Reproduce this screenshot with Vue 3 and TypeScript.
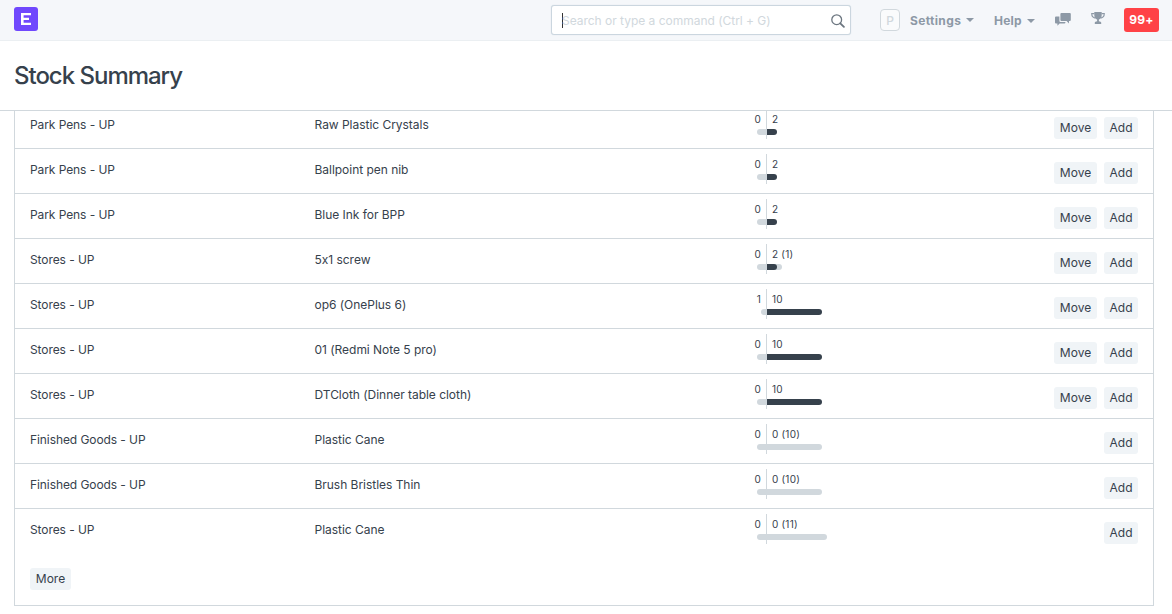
<script setup lang="ts">
interface StockRow {
  warehouse: string
  item: string
  reserved: string
  actual: string
  left: number
  dark: number
  light: number
  movable: boolean
}

const rows: StockRow[] = [
  { warehouse: 'Park Pens - UP', item: 'Raw Plastic Crystals', reserved: '0', actual: '2', left: 9, dark: 10, light: 0, movable: true },
  { warehouse: 'Park Pens - UP', item: 'Ballpoint pen nib', reserved: '0', actual: '2', left: 9, dark: 10, light: 0, movable: true },
  { warehouse: 'Park Pens - UP', item: 'Blue Ink for BPP', reserved: '0', actual: '2', left: 9, dark: 10, light: 0, movable: true },
  { warehouse: 'Stores - UP', item: '5x1 screw', reserved: '0', actual: '2 (1)', left: 9, dark: 10, light: 15, movable: true },
  { warehouse: 'Stores - UP', item: 'op6 (OnePlus 6)', reserved: '1', actual: '10', left: 5, dark: 55, light: 0, movable: true },
  { warehouse: 'Stores - UP', item: '01 (Redmi Note 5 pro)', reserved: '0', actual: '10', left: 9, dark: 55, light: 0, movable: true },
  { warehouse: 'Stores - UP', item: 'DTCloth (Dinner table cloth)', reserved: '0', actual: '10', left: 9, dark: 55, light: 0, movable: true },
  { warehouse: 'Finished Goods - UP', item: 'Plastic Cane', reserved: '0', actual: '0 (10)', left: 9, dark: 0, light: 55, movable: false },
  { warehouse: 'Finished Goods - UP', item: 'Brush Bristles Thin', reserved: '0', actual: '0 (10)', left: 9, dark: 0, light: 55, movable: false },
  { warehouse: 'Stores - UP', item: 'Plastic Cane', reserved: '0', actual: '0 (11)', left: 9, dark: 0, light: 60, movable: false },
]
</script>

<template>
  <div class="page">
    <header class="navbar">
      <svg class="logo" width="24" height="24" viewBox="0 0 24 24">
        <rect width="24" height="24" rx="3" fill="#7048fd" />
        <path d="M7 6h10v2.200H9.600v2.600H15v2.200H9.600v2.800H17V18H7z" fill="#fff" />
      </svg>
      <div class="search">
        <span class="caret"></span>
        <span class="placeholder">Search or type a command (Ctrl + G)</span>
        <svg class="search-icon" width="14" height="14" viewBox="0 0 14 14" fill="none" stroke="#6c7680">
          <circle cx="5.7" cy="5.7" r="4.9" stroke-width="1.3" />
          <path d="M9.3 9.3l3.600 3.600" stroke-width="1.8" stroke-linecap="round" />
        </svg>
      </div>
      <nav class="menu">
        <span class="avatar">P</span>
        <span class="menu-item settings">Settings<i class="arrow"></i></span>
        <span class="menu-item help">Help<i class="arrow low"></i></span>
        <svg class="chat" width="16" height="14" viewBox="0 0 16 14" fill="#8d99a6">
          <path d="M6.4 0h8.400a1 1 0 0 1 1 1v6a1 1 0 0 1-1 1h-.8v2.400L11.600 8H6.400a1 1 0 0 1-1-1V1a1 1 0 0 1 1-1z" />
          <path d="M1 3.500h3.400v4.500a1 1 0 0 0 1 1h5v.5a1 1 0 0 1-1 1H4.600L2.400 12.700v-2.200H1a1 1 0 0 1-1-1v-5a1 1 0 0 1 1-1z" />
        </svg>
        <svg class="trophy" width="14" height="12" viewBox="0 0 14 12">
          <path d="M3.500 1.600H.700c0 2.800 1.200 4.200 3.600 4.500M10.500 1.600h2.800c0 2.800-1.200 4.200-3.600 4.500" fill="none" stroke="#8d99a6" stroke-width="1.1" />
          <path d="M3.300 0h7.400v3.200c0 2.200-1.200 3.700-2.800 4.200v1.800c1.400.2 2.300.7 2.300 1.400V12H3.800v-1.400c0-.7.9-1.200 2.300-1.400V7.400C4.500 6.900 3.300 5.400 3.300 3.200z" fill="#8d99a6" />
        </svg>
        <span class="badge">99+</span>
      </nav>
    </header>

    <div class="page-head"><h1>Stock Summary</h1></div>

    <main class="viewport">
      <section class="panel">
        <div v-for="(row, i) in rows" :key="i" class="row">
          <div class="warehouse">{{ row.warehouse }}</div>
          <div class="item">{{ row.item }}</div>
          <div class="balance">
            <div class="side before">
              <span class="count">{{ row.reserved }}</span>
              <div class="bar-left" :style="{ width: row.left + 'px' }"></div>
            </div>
            <div class="side after">
              <span class="count">{{ row.actual }}</span>
              <div class="bars">
                <div v-if="row.light" class="bar light" :style="{ width: row.light + 'px' }"></div>
                <div v-if="row.dark" class="bar dark" :style="{ width: row.dark + 'px' }"></div>
              </div>
            </div>
          </div>
          <div class="actions">
            <button v-if="row.movable" class="btn move">Move</button>
            <button class="btn add">Add</button>
          </div>
        </div>
        <div class="more"><button class="btn more-btn">More</button></div>
      </section>
    </main>
  </div>
</template>

<style>
body {
  margin: 0;
  background: #fff;
  overflow: hidden;
}
</style>

<style scoped>
.page {
  width: 1172px;
  height: 614px;
  overflow: hidden;
  display: flex;
  flex-direction: column;
  font-family: Inter, "Liberation Sans", sans-serif;
  font-size: 12px;
  color: #36414c;
}
.page * {
  box-sizing: border-box;
}
.navbar {
  height: 41px;
  flex: none;
  display: flex;
  align-items: flex-start;
  background: #f5f7fa;
  border-bottom: 1px solid #ebeff2;
}
.logo {
  display: block;
  margin: 7px 0 0 14px;
}
.search {
  display: flex;
  align-items: center;
  width: 300px;
  height: 30px;
  margin: 5px 0 0 513px;
  padding: 0 5px 0 10px;
  background: #fff;
  border: 1px solid #cbd6df;
  border-radius: 3px;
  box-shadow: 0 0 1px #cbd6df;
}
.caret {
  width: 1px;
  height: 15px;
  margin-right: -1px;
  background: #333;
}
.placeholder {
  flex: 1;
  white-space: nowrap;
  color: #d1d8dd;
  letter-spacing: -0.02px;
}
.search-icon {
  margin-top: 1px;
}
.menu {
  display: flex;
  align-items: flex-start;
}
.avatar {
  width: 20px;
  height: 22px;
  margin: 9px 0 0 29px;
  border: 1px solid #d1d8dd;
  border-radius: 4px;
  background: #fafbfc;
  color: #d1d8dd;
  font-weight: 500;
  line-height: 21px;
  text-align: center;
}
.menu-item {
  display: flex;
  align-items: center;
  height: 16px;
  margin-top: 12px;
  color: #8d99a6;
  font-weight: 700;
}
.settings {
  width: 84px;
  margin-left: 10px;
  letter-spacing: 0.35px;
}
.help {
  width: 61px;
  letter-spacing: 0.2px;
}
.arrow {
  margin-left: 5px;
  border: 4px solid transparent;
  border-top-color: #8d99a6;
  border-bottom: 0;
}
.arrow.low {
  margin-top: 2px;
}
.chat {
  margin-top: 13px;
}
.trophy {
  margin: 12px 0 0 20px;
}
.badge {
  width: 35px;
  height: 24px;
  margin: 8px 0 0 19px;
  border-radius: 3px;
  background: #ff4246;
  color: #fff;
  font-weight: 700;
  line-height: 24px;
  text-align: center;
  letter-spacing: 0.2px;
}
.page-head {
  height: 70px;
  flex: none;
  padding-left: 14px;
  border-bottom: 1px solid #d1d8dd;
}
h1 {
  margin: 0;
  font-size: 24px;
  font-weight: 500;
  line-height: 70px;
  letter-spacing: -1.02px;
}
.viewport {
  flex: 1;
  min-height: 0;
  overflow: hidden;
  padding: 0 18px 0 14px;
}
.panel {
  margin-top: -7px;
  height: 502px;
  border: 1px solid #d1d8dd;
  border-top: 0;
}
.row {
  display: grid;
  grid-template-columns: 284.5px 427px 1fr 120px;
  height: 45px;
  padding: 0 15px;
  border-bottom: 1px solid #d1d8dd;
}
.row:nth-child(10) {
  border-bottom: 0;
}
.warehouse,
.item {
  padding-top: 13px;
  line-height: 16px;
  white-space: nowrap;
  letter-spacing: -0.03px;
}
.warehouse {
  letter-spacing: -0.08px;
}
.balance {
  display: flex;
  height: 30px;
  margin-top: 5px;
}
.side {
  display: flex;
  flex-direction: column;
}
.before {
  width: 25.5px;
  align-items: flex-end;
  border-right: 1px solid #d1d8dd;
}
.count {
  height: 20px;
  padding: 0 5px;
  font-size: 10px;
  line-height: 20px;
  white-space: nowrap;
  letter-spacing: 0.2px;
}
.bar-left {
  height: 6px;
  border-radius: 3px 0 0 3px;
  background: #d1d8dd;
}
.bars {
  display: grid;
}
.bar {
  grid-area: 1 / 1;
  height: 6px;
  border-radius: 0 3px 3px 0;
}
.light {
  background: #d1d8dd;
}
.dark {
  background: #36414c;
}
.actions {
  display: flex;
  justify-content: flex-end;
  gap: 7px;
  padding-top: 13px;
}
.btn {
  height: 22px;
  padding: 0;
  border: 0;
  border-radius: 3px;
  background: #f0f4f7;
  color: #36414c;
  font: inherit;
  line-height: 22px;
}
.move {
  width: 43px;
}
.add {
  width: 34px;
}
.more {
  padding: 14px 15px;
}
.more-btn {
  width: 41px;
}
</style>
